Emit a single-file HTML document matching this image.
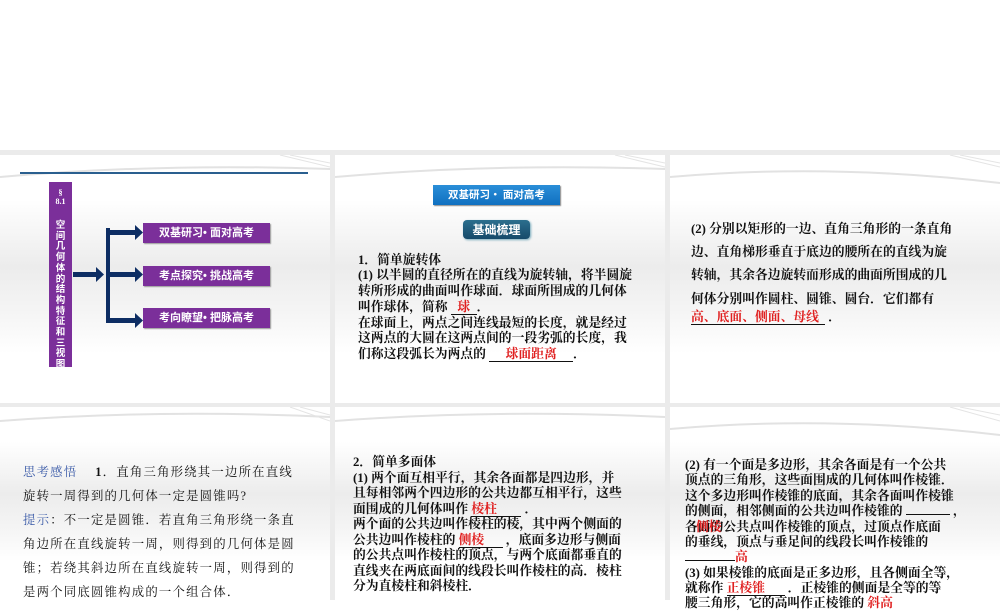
<!DOCTYPE html>
<html><head><meta charset="utf-8"><style>
*{margin:0;padding:0;box-sizing:border-box}
body{width:1000px;height:600px;background:#fff;position:relative;overflow:hidden;font-family:"Liberation Serif","Noto Serif CJK SC",serif}
.bg{position:absolute;top:150px;left:0;width:1000px;height:450px;background:#ebebeb}
.s{position:absolute;overflow:hidden;background:linear-gradient(#fff 0%,#fff 18%,#ececec 45%,#f4f4f4 62%,#fff 80%,#fff 100%)}
.sw{position:absolute;left:0;top:0;width:100%;height:40px}
.t{position:absolute;white-space:nowrap;font-size:12.8px;color:#111;font-weight:bold}
.u{display:inline-block;border-bottom:1px solid #111;text-align:center;color:#e02020;line-height:13px}
.pb{position:absolute;background:#7b2f9a;color:#fff;font:bold 11px "Liberation Sans","Noto Sans CJK SC",sans-serif;text-align:center;line-height:20px;box-shadow:1px 1px 1px #999}
.n{font-weight:normal}
</style></head><body>
<div class="bg"></div>

<!-- slide 1 -->
<div class="s" style="left:0;top:155px;width:330px;height:248px">
<svg class="sw" viewBox="0 0 330 40"><path d="M0 22 Q160 8 330 14" stroke="#e2e2e2" stroke-width="2" fill="none"/><path d="M280 0 L330 12 M290 0 L330 8" stroke="#e4e4e4" fill="none"/></svg>
<div style="position:absolute;left:20px;top:17px;width:288px;height:2px;background:#2a5f8f"></div>
<div style="position:absolute;left:49px;top:27px;width:23px;height:185px;background:#7b2f9a;color:#fff;font:bold 8px 'Liberation Serif',serif;text-align:center;line-height:9px;padding-top:6px;overflow:hidden">§<br>8.1<div style="font:bold 9.5px 'Noto Sans CJK SC',sans-serif;line-height:10.7px;margin-top:13px">空<br>间<br>几<br>何<br>体<br>的<br>结<br>构<br>特<br>征<br>和<br>三<br>视<br>图</div></div>
<svg style="position:absolute;left:0;top:0" width="330" height="248">
<g fill="#0d2d63"><rect x="73" y="117" width="24" height="5"/><polygon points="96,112 104,119.5 96,127"/>
<rect x="106" y="73" width="4" height="95"/>
<rect x="108" y="75" width="28" height="5"/><polygon points="135,70 143,77.5 135,85"/>
<rect x="108" y="117" width="28" height="5"/><polygon points="135,112 143,119.5 135,127"/>
<rect x="108" y="163" width="28" height="5"/><polygon points="135,158 143,165.5 135,173"/></g></svg>
</div>
<div class="pb" style="left:143px;top:223px;width:127px">双基研习• 面对高考</div>
<div class="pb" style="left:143px;top:266px;width:127px">考点探究• 挑战高考</div>
<div class="pb" style="left:143px;top:308px;width:127px">考向瞭望• 把脉高考</div>

<!-- slide 2 -->
<div class="s" style="left:335px;top:155px;width:330px;height:248px">
<svg class="sw" viewBox="0 0 330 40"><path d="M0 22 Q160 8 330 14" stroke="#e2e2e2" stroke-width="2" fill="none"/><path d="M280 0 L330 12 M290 0 L330 8" stroke="#e4e4e4" fill="none"/></svg>
</div>
<div style="position:absolute;left:433px;top:185px;width:127px;height:20px;background:linear-gradient(#2a8ed8,#1070c0);color:#fff;font:bold 10.5px 'Noto Sans CJK SC',sans-serif;text-align:center;line-height:20px;box-shadow:1px 1px 1px #888">双基研习• 面对高考</div>
<div style="position:absolute;left:463px;top:220px;width:67px;height:19px;border-radius:4px;background:linear-gradient(#2c6f8e,#164a6a);color:#fff;font:bold 12px 'Noto Sans CJK SC',sans-serif;text-align:center;line-height:19px;box-shadow:1px 1px 2px #7ab">基础梳理</div>
<div class="t" style="left:358px;top:249px">1．简单旋转体</div>
<div class="t" style="left:358px;top:264px">(1) 以半圆的直径所在的直线为旋转轴，将半圆旋</div>
<div class="t" style="left:358px;top:280px">转所形成的曲面叫作球面．球面所围成的几何体</div>
<div class="t" style="left:358px;top:296px">叫作球体，简称 <span class="u" style="width:26px">球</span>．</div>
<div class="t" style="left:358px;top:312px">在球面上，两点之间连线最短的长度，就是经过</div>
<div class="t" style="left:358px;top:327px">这两点的大圆在这两点间的一段劣弧的长度，我</div>
<div class="t" style="left:358px;top:343px">们称这段弧长为两点的 <span class="u" style="width:84px">球面距离</span>．</div>

<!-- slide 3 -->
<div class="s" style="left:670px;top:155px;width:330px;height:248px">
<svg class="sw" viewBox="0 0 330 40"><path d="M0 22 Q160 8 330 28" stroke="#e2e2e2" stroke-width="2" fill="none"/><path d="M280 0 L330 12 M290 0 L330 8" stroke="#e4e4e4" fill="none"/></svg>
</div>
<div class="t" style="left:691px;top:218px;font-size:12.8px">(2) 分别以矩形的一边、直角三角形的一条直角</div>
<div class="t" style="left:691px;top:241px;font-size:12.8px">边、直角梯形垂直于底边的腰所在的直线为旋</div>
<div class="t" style="left:691px;top:264px;font-size:12.8px">转轴，其余各边旋转而形成的曲面所围成的几</div>
<div class="t" style="left:691px;top:288px;font-size:12.8px">何体分别叫作圆柱、圆锥、圆台．它们都有</div>
<div class="t" style="left:691px;top:306px;font-size:12.8px"><span class="u" style="width:134px;text-align:left">高、底面、侧面、母线</span> ．</div>

<!-- slide 4 -->
<div class="s" style="left:0;top:407px;width:330px;height:193px">
<svg class="sw" viewBox="0 0 330 40"><path d="M0 14 Q160 2 330 10" stroke="#e2e2e2" stroke-width="2" fill="none"/><path d="M290 0 L330 14 M300 0 L330 8" stroke="#e4e4e4" fill="none"/></svg>
</div>
<div class="t n" style="left:23px;top:462px;font-size:12.4px;letter-spacing:1.2px"><span style="color:#3b5ba8">思考感悟</span>　 <b>1</b>．直角三角形绕其一边所在直线</div>
<div class="t n" style="left:23px;top:486px;font-size:12.4px;letter-spacing:1.2px">旋转一周得到的几何体一定是圆锥吗?</div>
<div class="t n" style="left:23px;top:510px;font-size:12.4px;letter-spacing:1.2px"><span style="color:#3b5ba8">提示</span>：不一定是圆锥．若直角三角形绕一条直</div>
<div class="t n" style="left:23px;top:534px;font-size:12.4px;letter-spacing:1.2px">角边所在直线旋转一周，则得到的几何体是圆</div>
<div class="t n" style="left:23px;top:558px;font-size:12.4px;letter-spacing:1.2px">锥；若绕其斜边所在直线旋转一周，则得到的</div>
<div class="t n" style="left:23px;top:582px;font-size:12.4px;letter-spacing:1.2px">是两个同底圆锥构成的一个组合体．</div>

<!-- slide 5 -->
<div class="s" style="left:335px;top:407px;width:330px;height:193px">
<svg class="sw" viewBox="0 0 330 40"><path d="M0 14 Q160 2 330 10" stroke="#e2e2e2" stroke-width="2" fill="none"/></svg>
</div>
<div class="t" style="left:353px;top:451px">2．简单多面体</div>
<div class="t" style="left:353px;top:467px">(1) 两个面互相平行，其余各面都是四边形，并</div>
<div class="t" style="left:353px;top:482px">且每相邻两个四边形的公共边都互相平行，这些</div>
<div class="t" style="left:353px;top:498px">面围成的几何体叫作 <span class="u" style="width:50px;text-align:left">棱柱</span> ．</div>
<div class="t" style="left:353px;top:513px">两个面的公共边叫作棱柱的棱，其中两个侧面的</div>
<div class="t" style="left:353px;top:529px">公共边叫作棱柱的 <span class="u" style="width:44px;text-align:left">侧棱</span> ，底面多边形与侧面</div>
<div class="t" style="left:353px;top:544px">的公共点叫作棱柱的顶点，与两个底面都垂直的</div>
<div class="t" style="left:353px;top:560px">直线夹在两底面间的线段长叫作棱柱的高．棱柱</div>
<div class="t" style="left:353px;top:575px">分为直棱柱和斜棱柱．</div>

<!-- slide 6 -->
<div class="s" style="left:670px;top:407px;width:330px;height:193px">
<svg class="sw" viewBox="0 0 330 40"><path d="M0 22 Q160 8 330 28" stroke="#e2e2e2" stroke-width="2" fill="none"/><path d="M280 0 L330 14 M290 0 L330 8" stroke="#e4e4e4" fill="none"/></svg>
</div>
<div class="t" style="left:685px;top:454px">(2) 有一个面是多边形，其余各面是有一个公共</div>
<div class="t" style="left:685px;top:469px">顶点的三角形，这些面围成的几何体叫作棱锥．</div>
<div class="t" style="left:685px;top:485px">这个多边形叫作棱锥的底面，其余各面叫作棱锥</div>
<div class="t" style="left:685px;top:500px">的侧面，相邻侧面的公共边叫作棱锥的 <span class="u" style="width:44px"></span> ，</div>
<div class="t" style="left:685px;top:516px">各<span style="position:absolute;left:11px;top:0;color:#e02020">侧棱</span>面的公共点叫作棱锥的顶点，过顶点作底面</div>
<div class="t" style="left:685px;top:531px">的垂线，顶点与垂足间的线段长叫作棱锥的</div>
<div class="t" style="left:685px;top:546px"><span class="u" style="width:50px"></span><span style="color:#e02020">高</span></div>
<div class="t" style="left:685px;top:562px">(3) 如果棱锥的底面是正多边形，且各侧面全等，</div>
<div class="t" style="left:685px;top:577px">就称作 <span class="u" style="width:58px;text-align:left">正棱锥</span> ．正棱锥的侧面是全等的等</div>
<div class="t" style="left:685px;top:592px">腰三角形，它的高叫作正棱锥的 <span style="color:#e02020">斜高</span></div>
</body></html>
